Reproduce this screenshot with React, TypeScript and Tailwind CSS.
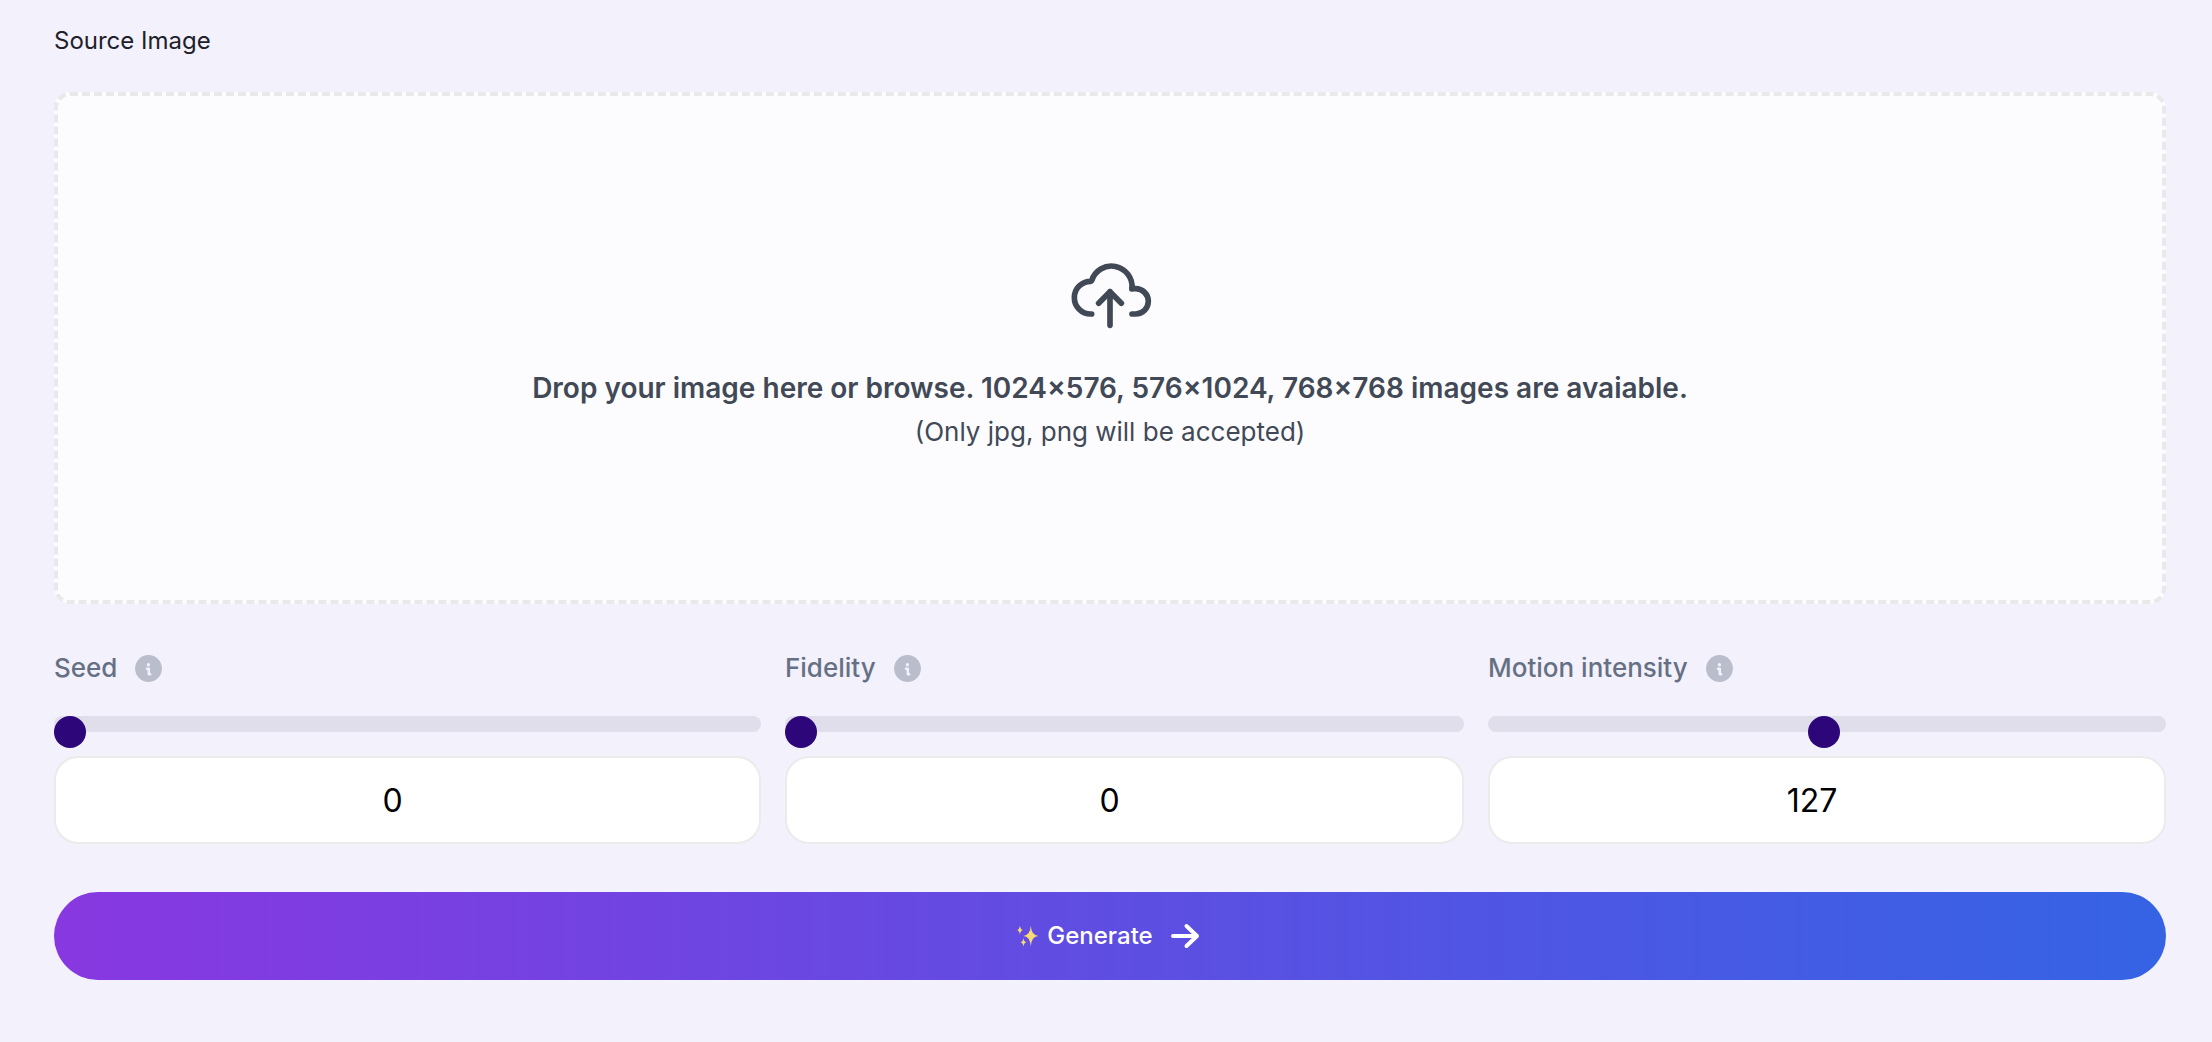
import { useState } from 'react';

interface SliderFieldProps {
  id: string;
  label: string;
  min: number;
  max: number;
  initial: number;
}

function CloudUploadIcon() {
  return (
    <svg
      viewBox="-29 -43 288 288"
      className="size-24"
      fill="none"
      stroke="currentColor"
      strokeWidth={17}
      strokeLinecap="round"
      strokeLinejoin="round"
      aria-hidden="true"
    >
      <path d="M60 155H57A49 49 0 0 1 57 57L60 55A62 62 0 0 1 181 79" />
      <path d="M181 79H192A38 38 0 0 1 192 155H181" />
      <path d="M115 189V88M81 123L115 88L149 123" />
    </svg>
  );
}

function InfoIcon() {
  return (
    <svg viewBox="0 0 27 27" className="size-[27px]" aria-hidden="true">
      <circle cx="13.5" cy="13.5" r="13.4" fill="#b9bdcc" />
      <circle cx="13.4" cy="9.7" r="1.7" fill="#f3f1fc" />
      <path
        d="M12 13.7H13.8V19.2H15.2"
        fill="none"
        stroke="#f3f1fc"
        strokeWidth="2.5"
        strokeLinecap="round"
        strokeLinejoin="round"
      />
    </svg>
  );
}

function SparklesIcon() {
  return (
    <svg viewBox="0 0 22 22" className="size-[22px]" fill="#f8dc72" aria-hidden="true">
      <path d="M13.8 0.8Q14.4 10.4 21.4 11Q14.4 11.6 13.8 21.2Q13.2 11.6 6.2 11Q13.2 10.4 13.8 0.8Z" />
      <path d="M2.9 0.4Q3.4 4.5 6 5Q3.4 5.5 2.9 9.6Q2.4 5.5 0 5Q2.4 4.5 2.9 0.4Z" />
      <path d="M6.4 13Q6.9 16.7 9.4 17.2Q6.9 17.7 6.4 21.6Q5.9 17.7 3.6 17.2Q5.9 16.7 6.4 13Z" />
    </svg>
  );
}

function ArrowRightIcon() {
  return (
    <svg
      viewBox="-2 0 34 26"
      className="h-[26px] w-[34px]"
      fill="none"
      stroke="currentColor"
      strokeWidth={4}
      strokeLinecap="round"
      strokeLinejoin="round"
      aria-hidden="true"
    >
      <path d="M2 13H26M15.5 3L26 13L15.5 23" />
    </svg>
  );
}

function SliderField({ id, label, min, max, initial }: SliderFieldProps) {
  const [value, setValue] = useState(initial);

  return (
    <div className="flex min-w-0 flex-col">
      <div className="flex items-center gap-[18px]">
        <label htmlFor={id} className="text-[26px] leading-10 font-medium text-[#667085]">
          {label}
        </label>
        <InfoIcon />
      </div>
      {/* the thumb hangs below the track, its top on the track's top */}
      <input
        type="range"
        aria-label={label}
        min={min}
        max={max}
        value={value}
        onChange={(e) => setValue(Number(e.target.value))}
        className="mt-7 block h-4 w-full appearance-none rounded-full bg-[#e0deeb] [&::-webkit-slider-thumb]:mt-4 [&::-webkit-slider-thumb]:size-8 [&::-webkit-slider-thumb]:appearance-none [&::-webkit-slider-thumb]:rounded-full [&::-webkit-slider-thumb]:bg-[#2d067a]"
      />
      <input
        id={id}
        type="number"
        min={min}
        max={max}
        value={value}
        onChange={(e) => setValue(Number(e.target.value))}
        className="mt-6 h-22 w-full appearance-none rounded-3xl border-2 border-[#ebebeb] bg-white pr-[46px] pl-4 text-center text-[32px] text-black [&::-webkit-inner-spin-button]:appearance-none"
      />
    </div>
  );
}

export default function App() {
  return (
    <main className="min-h-screen bg-[#f3f1fc] pt-4 pr-[46px] pb-14 pl-[54px] font-['Inter',sans-serif]">
      <h2 className="text-2xl leading-[50px] text-[#1d2129]">Source Image</h2>

      {/* Drop zone */}
      <label className="mt-[26px] flex h-128 cursor-pointer flex-col items-center justify-center rounded-2xl border-4 border-dashed border-[#e9e9eb] bg-[#fcfcfe] pt-[6px] text-[#424956]">
        <CloudUploadIcon />
        <span className="mt-[22px] text-[28px] leading-11 font-semibold">
          Drop your image here or browse. 1024×576, 576×1024, 768×768 images are avaiable.
        </span>
        <span className="text-[26px] leading-11">(Only jpg, png will be accepted)</span>
        <input type="file" accept="image/jpeg,image/png" className="sr-only" />
      </label>

      {/* Generation settings */}
      <div className="mt-11 grid grid-cols-[707fr_679fr_678fr] gap-6">
        <SliderField id="seed" label="Seed" min={0} max={100} initial={0} />
        <SliderField id="fidelity" label="Fidelity" min={0} max={100} initial={0} />
        <SliderField id="motion" label="Motion intensity" min={1} max={255} initial={127} />
      </div>

      <button
        type="button"
        className="mt-12 flex h-22 w-full cursor-pointer items-center justify-center rounded-full bg-linear-to-r/srgb from-[#8838e0] to-[#3563e4] text-2xl font-medium text-white"
      >
        <SparklesIcon />
        <span className="ml-2">Generate</span>
        <span className="ml-4">
          <ArrowRightIcon />
        </span>
      </button>
    </main>
  );
}
